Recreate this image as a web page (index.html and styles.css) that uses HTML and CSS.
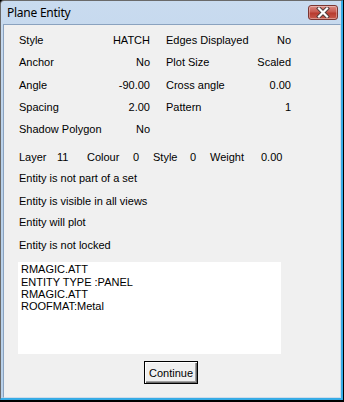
FILE: index.html
```html
<!DOCTYPE html>
<html>
<head>
<meta charset="utf-8">
<link rel="stylesheet" href="styles.css">
</head>
<body>
<div class="window">
  <div class="titlebar">
    <span class="title">Plane Entity</span>
    <div class="close">
      <svg width="16" height="11" viewBox="0 0 16 11">
        <path d="M4 1.5 L12 9.5 M12 1.5 L4 9.5" stroke="#4a3c3c" stroke-width="4" stroke-linecap="square" fill="none"/>
        <path d="M4 1.5 L12 9.5 M12 1.5 L4 9.5" stroke="#ffffff" stroke-width="2.2" stroke-linecap="square" fill="none"/>
      </svg>
    </div>
  </div>
  <div class="client">
    <div class="props">
      <div class="cell"><span>Style</span><span>HATCH</span></div>
      <div class="cell"><span>Edges Displayed</span><span>No</span></div>
      <div class="cell"><span>Anchor</span><span>No</span></div>
      <div class="cell"><span>Plot Size</span><span>Scaled</span></div>
      <div class="cell"><span>Angle</span><span>-90.00</span></div>
      <div class="cell"><span>Cross angle</span><span>0.00</span></div>
      <div class="cell"><span>Spacing</span><span>2.00</span></div>
      <div class="cell"><span>Pattern</span><span>1</span></div>
      <div class="cell"><span>Shadow Polygon</span><span>No</span></div>
      <div class="cell"></div>
    </div>
    <div class="layer-row">
      <span>Layer</span><span>11</span><span>Colour</span><span>0</span><span>Style</span><span>0</span><span>Weight</span><span>0.00</span>
    </div>
    <div class="line gap-s">Entity is not part of a set</div>
    <div class="line gap-l">Entity is visible in all views</div>
    <div class="line gap-s">Entity will plot</div>
    <div class="line gap-l">Entity is not locked</div>
    <div class="textbox">
      <div>RMAGIC.ATT</div>
      <div>ENTITY TYPE :PANEL</div>
      <div>RMAGIC.ATT</div>
      <div>ROOFMAT:Metal</div>
    </div>
    <button class="btn">Continue</button>
  </div>
</div>
</body>
</html>
```
FILE: styles.css
```css
html, body {
  margin: 0;
  padding: 0;
  background: #000;
}
body {
  width: 344px;
  height: 402px;
  overflow: hidden;
}
.window {
  width: 340px;
  height: 397px;
  border-top: 1px solid #6a6a6a;
  border-left: 1px solid #6a6a6a;
  border-right: 2px solid #36ace6;
  border-bottom: 2px solid #36ace6;
  border-top-left-radius: 4px;
  background: linear-gradient(#c9dbef, #b9d1ea 40%, #b9d1ea);
  display: flex;
  flex-direction: column;
}
.titlebar {
  height: 22px;
  padding-top: 1px;
  display: flex;
  align-items: flex-start;
}
.title {
  font-family: "Noto Sans", "Open Sans", sans-serif;
  font-size: 12px;
  line-height: 22px;
  letter-spacing: -0.25px;
  color: #000;
  padding-left: 6px;
}
.close {
  margin-left: auto;
  margin-right: 3px;
  margin-top: 3px;
  width: 28px;
  height: 13px;
  border: 1px solid #7b3632;
  border-radius: 3px;
  background: linear-gradient(#dc8a82, #c75a50 45%, #b73b2f 55%, #c85a4c);
  box-shadow: inset 0 0 0 1px rgba(255,255,255,0.35);
  display: flex;
  align-items: center;
  justify-content: center;
}
.close svg {
  display: block;
}
.client {
  margin-left: 2px;
  height: 372px;
  border-left: 1px solid #8aa2bf;
  border-top: 1px solid #8aa2bf;
  border-right: 1px solid #cfdcea;
  border-bottom: 1px solid #cfdcea;
  background: #f0f0f0;
  padding: 9px 0 0 15px;
  box-sizing: content-box;
  width: 321px;
  display: flex;
  flex-direction: column;
  align-items: flex-start;
  font-family: "Liberation Sans", Arial, sans-serif;
  font-size: 11px;
  line-height: 13px;
  color: #000;
}
.props {
  display: grid;
  grid-template-columns: 131px 125px;
  column-gap: 16px;
  row-gap: 9.3px;
}
.cell {
  display: flex;
  justify-content: space-between;
  height: 13px;
}
.layer-row {
  margin-top: 14.8px;
  display: grid;
  grid-template-columns: 38px 30px 46px 20px 37px 20px 51px auto;
}
.line {
  height: 13px;
}
.gap-s {
  margin-top: 7.6px;
}
.gap-l {
  margin-top: 10.5px;
}
.textbox {
  margin-top: 10px;
  margin-left: -1px;
  width: 260px;
  height: 91px;
  padding: 1px 0 0 3px;
  background: #fff;
  line-height: 12.33px;
}
.btn {
  margin-top: 7px;
  margin-left: 125px;
  width: 54px;
  height: 23px;
  padding: 0;
  border: 1px solid #000;
  background: #f0f0f0;
  box-shadow: inset 1px 1px 0 #fff, inset -1px -1px 0 #696969, inset -2px -2px 0 #a0a0a0;
  font-family: "Liberation Sans", Arial, sans-serif;
  font-size: 11px;
  color: #000;
}
```
